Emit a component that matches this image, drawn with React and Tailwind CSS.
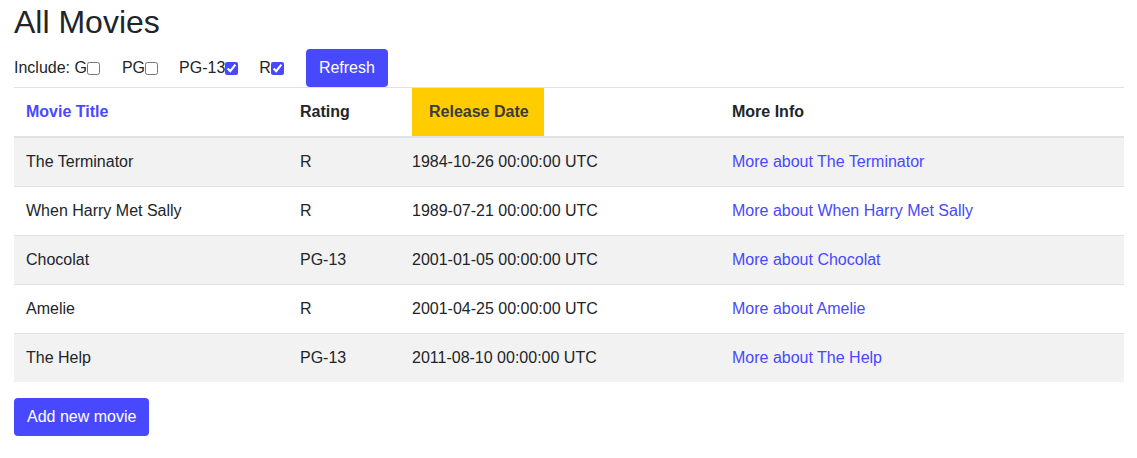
import React from "react";

const movies = [
  { title: "The Terminator", rating: "R", date: "1984-10-26 00:00:00 UTC" },
  { title: "When Harry Met Sally", rating: "R", date: "1989-07-21 00:00:00 UTC" },
  { title: "Chocolat", rating: "PG-13", date: "2001-01-05 00:00:00 UTC" },
  { title: "Amelie", rating: "R", date: "2001-04-25 00:00:00 UTC" },
  { title: "The Help", rating: "PG-13", date: "2011-08-10 00:00:00 UTC" },
];

function Check({ label, checked, gap }) {
  return (
    <label className={`flex items-center ${gap}`}>
      <span>{label}</span>
      <input
        type="checkbox"
        defaultChecked={checked}
        className="m-0 w-[13px] h-[13px] accent-[#4848ff]"
      />
    </label>
  );
}

export default function App() {
  return (
    <div
      className="bg-white text-[#212529] px-[14px] min-h-[458px]"
      style={{ fontFamily: '"Liberation Sans", Arial, sans-serif' }}
    >
      <h1 className="mt-[3px] mb-2 h-[38px] text-[32px] leading-[38px] font-normal">All Movies</h1>
      <div className="flex items-center text-base leading-6 h-[38px]">
        <span className="whitespace-pre">Include: </span>
        <Check label="G" gap="" />
        <Check label="PG" gap="ml-[22px]" />
        <Check label="PG-13" checked gap="ml-[21px]" />
        <Check label="R" checked gap="ml-[21px]" />
        <button className="ml-[22px] h-[38px] px-[13px] rounded-[4px] bg-[#4848ff] text-white text-base leading-6">
          Refresh
        </button>
      </div>
      <table className="w-[1110px] border-collapse table-fixed text-base leading-6">
        <colgroup>
          <col className="w-[274px]" />
          <col className="w-[112px]" />
          <col className="w-[320px]" />
          <col className="w-[404px]" />
        </colgroup>
        <thead>
          <tr className="border-t border-[#dee2e6] border-b-2">
            <th className="text-left font-bold px-3 py-3 text-[#4848ff]">Movie Title</th>
            <th className="text-left font-bold px-3 py-3">Rating</th>
            <th className="text-left font-bold p-0 pl-3 align-top">
              <div className="inline-block bg-[#ffcc00] h-[48px] pl-[17px] pr-[15px] py-3 text-[#3b3b3b]">
                Release Date
              </div>
            </th>
            <th className="text-left font-bold px-3 py-3">More Info</th>
          </tr>
        </thead>
        <tbody>
          {movies.map((m, i) => (
            <tr
              key={m.title}
              className={`border-t border-[#dee2e6] ${i % 2 === 0 ? "bg-[#f2f2f2]" : "bg-white"}`}
            >
              <td className="px-3 py-3">{m.title}</td>
              <td className="px-3 py-3">{m.rating}</td>
              <td className="px-3 py-3">{m.date}</td>
              <td className="px-3 py-3">
                <a href="#" className="text-[#4848ff]">More about {m.title}</a>
              </td>
            </tr>
          ))}
        </tbody>
      </table>
      <button className="mt-4 h-[38px] px-[13px] rounded-[4px] bg-[#4848ff] text-white text-base leading-6">
        Add new movie
      </button>
    </div>
  );
}
